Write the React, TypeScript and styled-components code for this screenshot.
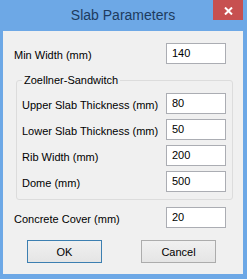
import React from 'react'
import styled, { createGlobalStyle } from 'styled-components'

const GlobalStyle = createGlobalStyle`
  html, body {
    margin: 0;
    padding: 0;
  }
  body {
    font-family: "Liberation Sans", Arial, sans-serif;
    font-size: 11px;
    color: #000;
  }
`

const Window = styled.div`
  width: 247px;
  height: 279px;
  box-sizing: border-box;
  padding: 0 4px 5px 3px;
  background: #6da8e6;
  display: flex;
  flex-direction: column;
`

const TitleBar = styled.div`
  height: 31px;
  flex-shrink: 0;
  display: grid;
  grid-template-columns: 30px 1fr 30px;
  align-items: start;
`

const Title = styled.div`
  grid-column: 2;
  margin-top: 7px;
  text-align: center;
  font-size: 14px;
  line-height: 16px;
  color: #1d3b5e;
`

const CloseButton = styled.div`
  grid-column: 3;
  height: 20px;
  background: #c75050;
  display: flex;
  align-items: center;
  justify-content: center;
  padding-top: 2px;
  box-sizing: border-box;
`

const Client = styled.div`
  flex: 1;
  background: #f0f0f0;
  display: flex;
  flex-direction: column;
`

const Row = styled.div<{ top?: number }>`
  height: 21px;
  margin-top: ${({ top }) => top ?? 0}px;
  padding: 0 17px 0 11px;
  display: flex;
  align-items: center;
  justify-content: space-between;
`

const GroupRow = styled(Row)`
  padding: 0;
`

const Label = styled.span`
  line-height: 14px;
  padding-top: 2px;
`

const Field = styled.input`
  width: 60px;
  height: 21px;
  box-sizing: border-box;
  margin: 0;
  border: 1px solid #abadb3;
  padding: 0 5px 2px;
  background: #fff;
  font-family: inherit;
  font-size: 11px;
  color: #000;
  outline: none;
`

const Group = styled.fieldset`
  margin: 9px 10px 0 13px;
  padding: 6px 6px 7px 5px;
  border: 1px solid #dcdcdc;
  border-radius: 3px;
  min-inline-size: 0;
  display: flex;
  flex-direction: column;
  gap: 5px;
`

const Legend = styled.legend`
  padding: 0 2px;
  line-height: 14px;
`

const Buttons = styled.div`
  margin-top: 12px;
  padding-left: 24px;
  display: flex;
  gap: 39px;
`

const Button = styled.button<{ primary?: boolean }>`
  width: 75px;
  height: 23px;
  margin: 0;
  padding: 0;
  border: 1px solid ${({ primary }) => (primary ? '#3c7fb1' : '#acacac')};
  background: linear-gradient(#f0f0f0, #e5e5e5);
  font-family: inherit;
  font-size: 11px;
  color: #000;
`

const fields = [
  { label: 'Upper Slab Thickness (mm)', value: '80' },
  { label: 'Lower Slab Thickness (mm)', value: '50' },
  { label: 'Rib Width (mm)', value: '200' },
  { label: 'Dome (mm)', value: '500' },
]

export default function App() {
  return (
    <>
      <GlobalStyle />
      <Window>
        <TitleBar>
          <Title>Slab Parameters</Title>
          <CloseButton>
            <svg width="9" height="8" viewBox="0 0 9 8">
              <path d="M1 0.5 L8 7.5 M8 0.5 L1 7.5" stroke="#fff" strokeWidth="2" />
            </svg>
          </CloseButton>
        </TitleBar>
        <Client>
          <Row top={12}>
            <Label>Min Width (mm)</Label>
            <Field defaultValue="140" />
          </Row>
          <Group>
            <Legend>Zoellner-Sandwitch</Legend>
            {fields.map((f) => (
              <GroupRow key={f.label}>
                <Label>{f.label}</Label>
                <Field defaultValue={f.value} />
              </GroupRow>
            ))}
          </Group>
          <Row top={7}>
            <Label>Concrete Cover (mm)</Label>
            <Field defaultValue="20" />
          </Row>
          <Buttons>
            <Button primary>OK</Button>
            <Button>Cancel</Button>
          </Buttons>
        </Client>
      </Window>
    </>
  )
}
